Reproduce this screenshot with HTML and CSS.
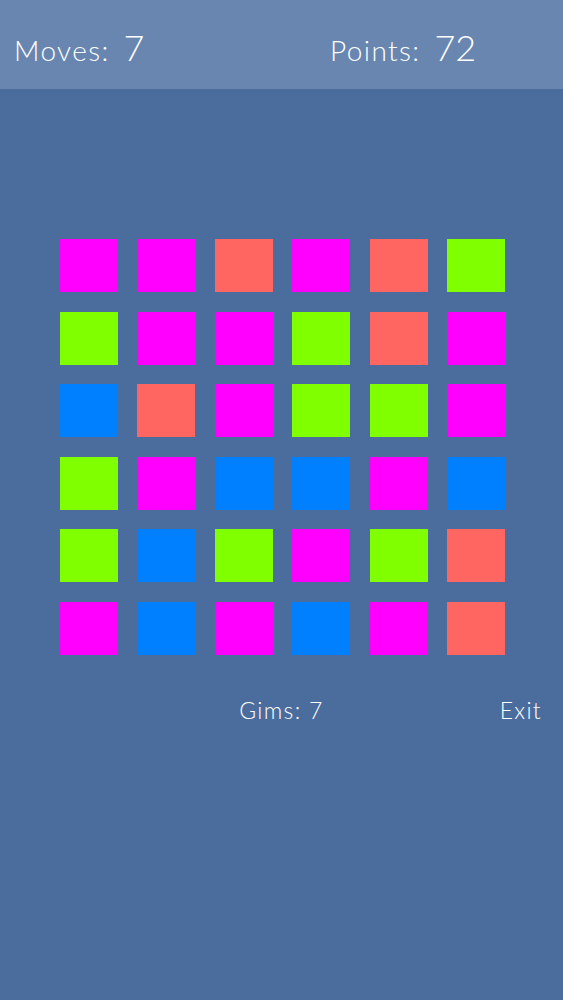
FILE: index.html
```html
<!DOCTYPE html>
<html lang="en">
<head>
    <meta charset="UTF-8">
    <meta name="viewport" content="width=device-width, initial-scale=1.0">
    <title>Gims</title>
    <link rel="stylesheet" href="styles.css">
</head>
<body>

<div class="header">
    <div class="stat"><span class="label">Moves:</span> <span class="value">7</span></div>
    <div class="stat"><span class="label">Points:</span> <span class="value">72</span></div>
</div>

<div class="board">
    <div class="gim pink"></div><div class="gim pink"></div><div class="gim red"></div><div class="gim pink"></div><div class="gim red"></div><div class="gim green"></div>
    <div class="gim green"></div><div class="gim pink"></div><div class="gim pink"></div><div class="gim green"></div><div class="gim red"></div><div class="gim pink"></div>
    <div class="gim blue"></div><div class="gim red"></div><div class="gim pink"></div><div class="gim green"></div><div class="gim green"></div><div class="gim pink"></div>
    <div class="gim green"></div><div class="gim pink"></div><div class="gim blue"></div><div class="gim blue"></div><div class="gim pink"></div><div class="gim blue"></div>
    <div class="gim green"></div><div class="gim blue"></div><div class="gim green"></div><div class="gim pink"></div><div class="gim green"></div><div class="gim red"></div>
    <div class="gim pink"></div><div class="gim blue"></div><div class="gim pink"></div><div class="gim blue"></div><div class="gim pink"></div><div class="gim red"></div>
</div>

<div class="footer">
    <span class="gims">Gims: 7</span>
    <span class="exit">Exit</span>
</div>

</body>
</html>
```

FILE: styles.css
```css
body {
    font-family: Lato, "Open Sans", sans-serif;
    font-weight: 300;
    background-color: #4b6d9e;
    color: white;
    margin: 0;
    height: 1000px;
}
.header {
    height: 89px;
    background-color: #6886b0;
    display: grid;
    grid-template-columns: 316px 1fr;
    align-items: center;
    padding-left: 14px;
    box-sizing: border-box;
}
.stat {
    display: flex;
    align-items: baseline;
    gap: 14px;
    padding-top: 4px;
}
.label {
    font-size: 28px;
    letter-spacing: 1.4px;
}
.value {
    font-size: 36px;
}
.board {
    display: grid;
    grid-template-columns: repeat(6, 58px);
    grid-auto-rows: 53px;
    column-gap: 19.4px;
    row-gap: 19.6px;
    margin: 150px 0 0 60px;
}
.gim.pink { background-color: #ff00ff; }
.gim.red { background-color: #ff6661; }
.gim.green { background-color: #80ff00; }
.gim.blue { background-color: #0080ff; }
.footer {
    position: relative;
    text-align: center;
    margin-top: 40px;
    font-size: 23px;
    line-height: 30px;
    letter-spacing: 1.3px;
}
.exit {
    position: absolute;
    right: 21px;
    top: 0;
}
```
